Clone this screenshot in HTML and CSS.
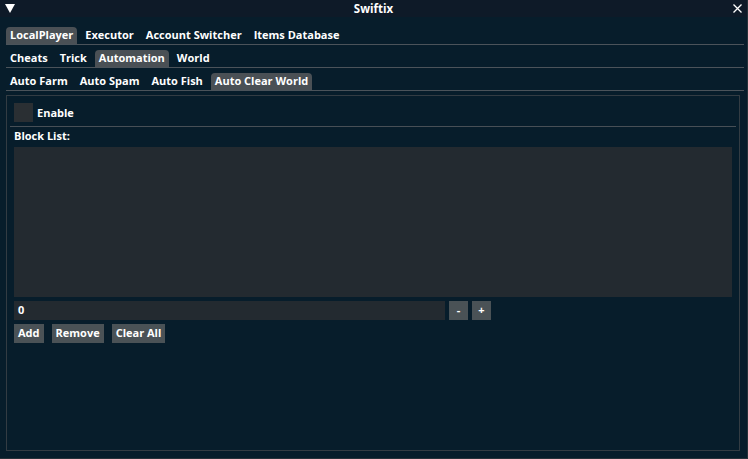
FILE: index.html
```html
<!DOCTYPE html>
<html>
<head>
<meta charset="utf-8">
<link rel="stylesheet" href="styles.css">
</head>
<body>
<div class="window">
  <div class="titlebar">
    <svg class="collapse" width="10" height="9" viewBox="0 0 10 9"><polygon points="0,0 10,0 5,9" fill="#fff"/></svg>
    <span class="title">Swiftix</span>
    <svg class="close" width="9" height="9" viewBox="0 0 9 9"><path d="M0.5 0.5 L8.5 8.5 M8.5 0.5 L0.5 8.5" stroke="#fff" stroke-width="1.3"/></svg>
  </div>
  <div class="content">
    <div class="tabbar first">
      <span class="tab active">LocalPlayer</span>
      <span class="tab">Executor</span>
      <span class="tab">Account Switcher</span>
      <span class="tab">Items Database</span>
    </div>
    <div class="tabbar">
      <span class="tab">Cheats</span>
      <span class="tab">Trick</span>
      <span class="tab active">Automation</span>
      <span class="tab">World</span>
    </div>
    <div class="tabbar">
      <span class="tab">Auto Farm</span>
      <span class="tab">Auto Spam</span>
      <span class="tab">Auto Fish</span>
      <span class="tab active">Auto Clear World</span>
    </div>
    <div class="child">
      <label class="checkrow"><span class="checkbox"></span><span>Enable</span></label>
      <div class="separator"></div>
      <div class="label">Block List:</div>
      <div class="listbox"></div>
      <div class="inputrow">
        <div class="input">0</div>
        <span class="btn sq">-</span>
        <span class="btn sq">+</span>
      </div>
      <div class="btnrow">
        <span class="btn">Add</span>
        <span class="btn">Remove</span>
        <span class="btn">Clear All</span>
      </div>
    </div>
  </div>
</div>
</body>
</html>
```
FILE: styles.css
```css
* { box-sizing: border-box; }
html, body { margin: 0; padding: 0; }
body {
  width: 748px;
  height: 459px;
  background: #071d2b;
  font-family: "Open Sans", "Noto Sans", sans-serif;
  font-weight: 700;
  font-size: 11px;
  color: #ffffff;
  overflow: hidden;
}
.window {
  width: 748px;
  height: 459px;
  display: flex;
  flex-direction: column;
  border-right: 1px solid #26323a;
  border-bottom: 1px solid #26323a;
}
.titlebar {
  height: 17px;
  flex: 0 0 17px;
  background: #0e1a28;
  display: flex;
  align-items: center;
  justify-content: center;
  position: relative;
}
.title { line-height: 17px; font-size: 11.5px; }
.collapse { position: absolute; left: 5px; top: 4px; }
.close { position: absolute; left: 733px; top: 4px; }
.content {
  flex: 1;
  padding: 10px 3px 8px 6px;
  display: flex;
  flex-direction: column;
}
.tabbar {
  display: flex;
  gap: 4px;
  height: 18px;
  border-bottom: 1px solid #4b535a;
  margin-top: 5px;
}
.tabbar.first { margin-top: 0; }
.tab {
  height: 17px;
  line-height: 16px;
  padding: 0 4px;
  border-radius: 4px 4px 0 0;
  white-space: nowrap;
}
.tab.active { background: #4a5055; }
.child {
  margin-top: 4px;
  width: 734px;
  height: 356px;
  border: 1px solid #333c43;
  padding: 7px 7px 0 7px;
  display: flex;
  flex-direction: column;
  position: relative;
}
.checkrow {
  display: flex;
  align-items: center;
  gap: 4px;
  height: 19px;
}
.checkbox {
  width: 19px;
  height: 19px;
  background: #2a2f33;
}
.separator {
  height: 1px;
  background: #474f56;
  margin: 4px -4px 0 -4px;
}
.label {
  height: 17px;
  line-height: 16px;
  margin-top: 1px;
}
.listbox {
  margin-top: 2px;
  height: 150px;
  width: 718px;
  background: #232a30;
}
.inputrow {
  margin-top: 4px;
  display: flex;
  gap: 4px;
  height: 19px;
}
.input {
  width: 431px;
  height: 19px;
  line-height: 18px;
  background: #232a30;
  padding-left: 4px;
}
.btn {
  background: #4a5256;
  height: 19px;
  line-height: 18px;
  padding: 0 4px;
  white-space: nowrap;
}
.btn.sq {
  width: 19px;
  padding: 0;
  text-align: center;
}
.btnrow {
  margin-top: 4px;
  display: flex;
  gap: 8px;
}
```
